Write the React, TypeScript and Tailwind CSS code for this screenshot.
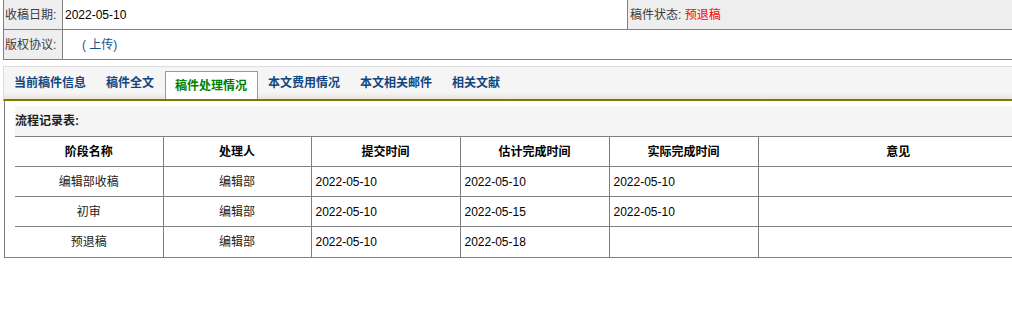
import React from 'react';

const tabs = ['当前稿件信息', '稿件全文', '稿件处理情况', '本文费用情况', '本文相关邮件', '相关文献'];

const rows = [
  { stage: '编辑部收稿', who: '编辑部', submit: '2022-05-10', plan: '2022-05-10', done: '2022-05-10' },
  { stage: '初审', who: '编辑部', submit: '2022-05-10', plan: '2022-05-15', done: '2022-05-10' },
  { stage: '预退稿', who: '编辑部', submit: '2022-05-10', plan: '2022-05-18', done: '' },
];

function App() {
  const active = 2;

  return (
    <div className="w-[1012px] h-[311px] overflow-hidden bg-white text-[12px] text-black font-['Liberation_Sans','Noto_Sans_CJK_SC',sans-serif]">
      {/* 稿件基本信息 */}
      <div className="ml-[3px] border-l border-[#808080]">
        <div className="flex h-[30px] border-b border-[#808080]">
          <div className="w-[59px] shrink-0 bg-[#eeeeee] border-r border-[#808080] flex items-center pl-[1px] text-[#3a3a3a]">收稿日期:</div>
          <div className="w-[565px] shrink-0 border-r border-[#808080] flex items-center pl-[2px]">2022-05-10</div>
          <div className="flex-1 bg-[#eeeeee] flex items-center pl-[2px] text-[#3a3a3a]">
            稿件状态:&nbsp;<span className="text-[#ff0000]">预退稿</span>
          </div>
        </div>
        <div className="flex h-[30px] border-b border-[#808080]">
          <div className="w-[59px] shrink-0 bg-[#eeeeee] border-r border-[#808080] flex items-center pl-[1px] text-[#3a3a3a]">版权协议:</div>
          <div className="flex-1 flex items-center pl-[19px] text-[#1a4f8f]">( 上传)</div>
        </div>
      </div>

      {/* 选项卡 */}
      <div className="mt-[6px] ml-[3px] border-t border-l border-[#dddddd] bg-gradient-to-b from-[#f5f5f5] from-80% to-[#e6e6dc] border-b-2 border-b-[#7b7b00] h-[35px] flex items-end">
        {tabs.map((t, i) =>
          i === active ? (
            <div key={t} className="h-[28px] ml-[1px] pl-[9px] pr-[10px] bg-white border border-b-0 border-[#999999] text-[#008000] font-bold flex items-center">
              {t}
            </div>
          ) : (
            <div key={t} className="h-[32px] px-[10px] text-[#12467f] font-bold flex items-center">
              {t}
            </div>
          )
        )}
      </div>

      {/* 流程记录 */}
      <div className="ml-[4px] border-l border-b border-[#808080] pl-[10px] pt-[5px]">
        <div className="h-[30px] bg-[#f5f5f5] flex items-center font-bold text-[#222]">流程记录表:</div>
        <table className="w-[1023px] border-collapse table-fixed">
          <colgroup>
            <col className="w-[148px]" />
            <col className="w-[148px]" />
            <col className="w-[149px]" />
            <col className="w-[149px]" />
            <col className="w-[149px]" />
            <col />
          </colgroup>
          <thead>
            <tr className="h-[30px]">
              {['阶段名称', '处理人', '提交时间', '估计完成时间', '实际完成时间', '意见'].map((h, i) => (
                <th key={h} className={`border-t border-[#808080] font-bold text-center ${i < 5 ? 'border-r' : ''}`}>
                  {h}
                </th>
              ))}
            </tr>
          </thead>
          <tbody>
            {rows.map((r) => (
              <tr key={r.stage} className="h-[30px]">
                <td className="border-t border-r border-[#808080] text-center text-[#222]">{r.stage}</td>
                <td className="border-t border-r border-[#808080] text-center text-[#222]">{r.who}</td>
                <td className="border-t border-r border-[#808080] pl-[4px]">{r.submit}</td>
                <td className="border-t border-r border-[#808080] pl-[4px]">{r.plan}</td>
                <td className="border-t border-r border-[#808080] pl-[4px]">{r.done}</td>
                <td className="border-t border-[#808080]"></td>
              </tr>
            ))}
          </tbody>
        </table>
      </div>
    </div>
  );
}

export default App;
